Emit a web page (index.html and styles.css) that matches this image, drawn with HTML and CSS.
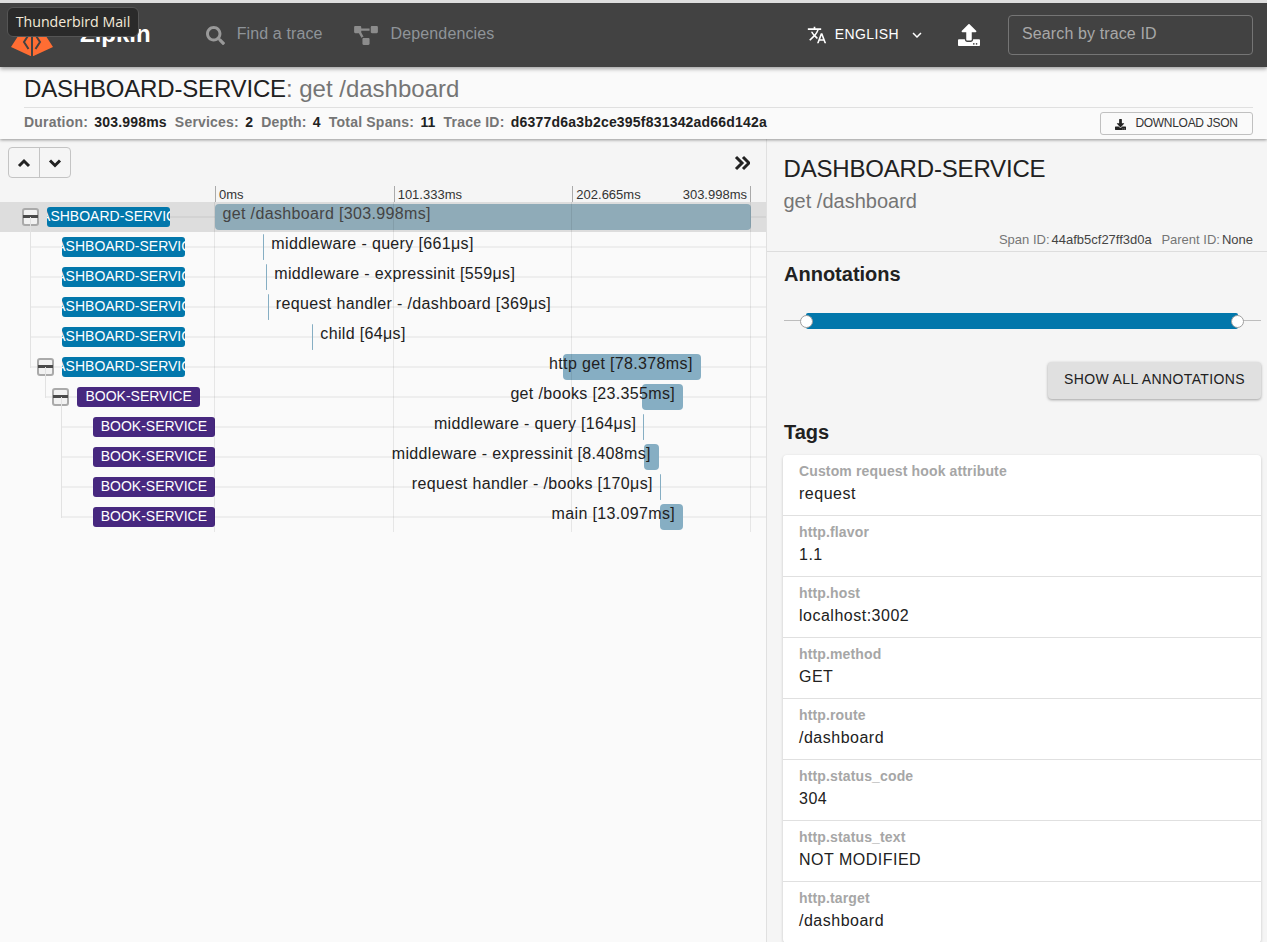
FILE: index.html
```html
<!DOCTYPE html>
<html lang="en">
<head>
<meta charset="utf-8">
<title>Zipkin</title>
<link rel="stylesheet" href="styles.css">
</head>
<body>
<div class="window-tip">Thunderbird Mail</div>
<header class="app-bar">
  <svg class="logo" viewBox="0 0 42 38" aria-hidden="true">
    <path class="logo-fill" d="M20 -3 0 28 19.500 37 20 37ZM22 -3 42 28 22.500 37 22 37Z"/>
    <path class="logo-cut" d="M17.500 16 13 23 17.500 30M24.500 16 29 23 24.500 30"/>
  </svg>
  <div class="brand">Zipkin</div>
  <nav class="nav">
    <a class="nav-item nav-find">
      <svg class="nav-icon" viewBox="0 0 512 512"><path d="M505 442.700 405.300 343c-4.500-4.500-10.600-7-17-7H372c27.600-35.300 44-79.700 44-128C416 93.100 322.900 0 208 0S0 93.100 0 208s93.100 208 208 208c48.300 0 92.700-16.400 128-44v16.300c0 6.400 2.500 12.500 7 17l99.700 99.700c9.400 9.400 24.600 9.400 33.900 0l28.300-28.300c9.400-9.400 9.400-24.600.1-34zM208 336c-70.700 0-128-57.200-128-128 0-70.700 57.200-128 128-128 70.700 0 128 57.200 128 128 0 70.700-57.200 128-128 128z"/></svg>
      <span>Find a trace</span>
    </a>
    <a class="nav-item nav-deps">
      <svg class="nav-icon-wide" viewBox="0 0 640 512"><path d="M384 320H256c-17.670 0-32 14.330-32 32v128c0 17.670 14.330 32 32 32h128c17.670 0 32-14.330 32-32V352c0-17.670-14.330-32-32-32zM192 32c0-17.670-14.330-32-32-32H32C14.330 0 0 14.330 0 32v128c0 17.670 14.330 32 32 32h95.720l73.160 128.040C211.980 300.980 232.400 288 256 288h.28L192 175.510V128h224V64H192V32zM608 0H480c-17.670 0-32 14.330-32 32v128c0 17.670 14.330 32 32 32h128c17.670 0 32-14.330 32-32V32c0-17.670-14.330-32-32-32z"/></svg>
      <span>Dependencies</span>
    </a>
  </nav>
  <div class="bar-actions">
    <button class="lang" type="button">
      <svg class="lang-icon" viewBox="0 0 24 24"><path d="M12.870 15.070l-2.540-2.510.03-.03c1.740-1.940 2.980-4.170 3.710-6.530H17V4h-7V2H8v2H1v1.990h11.170C11.500 7.920 10.440 9.750 9 11.350 8.070 10.320 7.300 9.190 6.690 8h-2c.73 1.630 1.730 3.170 2.980 4.560l-5.090 5.020L4 19l5-5 3.110 3.110.76-2.040zM18.500 10h-2L12 22h2l1.120-3h4.750L21 22h2l-4.500-12zm-2.620 7l1.620-4.330L19.120 17h-3.240z"/></svg>
      <span class="lang-text">ENGLISH</span>
      <svg class="lang-caret" viewBox="0 0 24 24"><path d="M16.590 8.590 12 13.170 7.410 8.590 6 10l6 6 6-6z"/></svg>
    </button>
    <svg class="upload" viewBox="0 0 512 512"><path d="M296 384h-80c-13.300 0-24-10.700-24-24V192h-87.700c-17.800 0-26.700-21.500-14.100-34.100L242.300 5.700c7.500-7.500 19.800-7.500 27.300 0l152.200 152.200c12.600 12.600 3.700 34.100-14.100 34.100H320v168c0 13.300-10.700 24-24 24zm216-8v112c0 13.300-10.700 24-24 24H24c-13.300 0-24-10.700-24-24V376c0-13.300 10.700-24 24-24h136v8c0 30.900 25.100 56 56 56h80c30.900 0 56-25.100 56-56v-8h136c13.300 0 24 10.700 24 24zm-124 88c0-11-9-20-20-20s-20 9-20 20 9 20 20 20 20-9 20-20zm64 0c0-11-9-20-20-20s-20 9-20 20 9 20 20 20 20-9 20-20z"/></svg>
    <input class="trace-search" type="text" placeholder="Search by trace ID">
  </div>
</header>

<section class="summary">
  <h1 class="summary-title"><span class="summary-service">DASHBOARD-SERVICE</span><span class="summary-op">: get /dashboard</span></h1>
  <div class="summary-meta">
    <dl class="stats">
      <dt>Duration:</dt><dd>303.998ms</dd>
      <dt>Services:</dt><dd>2</dd>
      <dt>Depth:</dt><dd>4</dd>
      <dt>Total Spans:</dt><dd>11</dd>
      <dt>Trace ID:</dt><dd>d6377d6a3b2ce395f831342ad66d142a</dd>
    </dl>
    <button class="download" type="button">
      <svg class="download-icon" viewBox="0 0 512 512"><path d="M216 0h80c13.300 0 24 10.700 24 24v168h87.700c17.800 0 26.700 21.500 14.100 34.100L269.700 378.300c-7.500 7.500-19.800 7.500-27.300 0L90.100 226.100c-12.600-12.600-3.700-34.100 14.100-34.100H192V24c0-13.300 10.700-24 24-24zm296 376v112c0 13.300-10.700 24-24 24H24c-13.300 0-24-10.700-24-24V376c0-13.300 10.700-24 24-24h146.700l49 49c20.100 20.100 52.500 20.100 72.600 0l49-49H488c13.300 0 24 10.700 24 24zm-124 88c0-11-9-20-20-20s-20 9-20 20 9 20 20 20 20-9 20-20zm64 0c0-11-9-20-20-20s-20 9-20 20 9 20 20 20 20-9 20-20z"/></svg>
      <span class="download-text">DOWNLOAD JSON</span>
    </button>
  </div>
</section>

<main class="trace-body">
  <section class="timeline">
    <div class="toolbar">
      <div class="stepper">
        <button class="step" type="button"><svg viewBox="0 0 16 16"><path d="M3 11 8 6 13 11"/></svg></button>
        <button class="step" type="button"><svg viewBox="0 0 16 16"><path d="M3 5.500 8 10.500 13 5.500"/></svg></button>
      </div>
      <svg class="collapse" viewBox="0 0 16 16"><path d="M2 2 8 8 2 14M9 2 15 8 9 14"/></svg>
    </div>
    <div class="ticks">
      <div class="tick"><span>0ms</span></div>
      <div class="tick"><span>101.333ms</span></div>
      <div class="tick tick-last"><span>202.665ms</span><span>303.998ms</span></div>
    </div>
    <div class="gantt">
      <div class="row row-active" style="--d:0">
        <div class="tree"><span class="toggle"></span><span class="badge dash"><span>DASHBOARD-SERVICE</span></span></div>
        <div class="track"><div class="span span-root" style="left:0;width:100%"><span class="label inside">get /dashboard [303.998ms]</span></div></div>
      </div>
      <div class="row" style="--d:1">
        <i class="stem"></i>
        <div class="tree"><span class="leaf"></span><span class="badge dash"><span>DASHBOARD-SERVICE</span></span></div>
        <div class="track"><div class="span" style="left:9.05%;width:.22%"><span class="label after">middleware - query [661μs]</span></div></div>
      </div>
      <div class="row" style="--d:1">
        <i class="stem"></i>
        <div class="tree"><span class="leaf"></span><span class="badge dash"><span>DASHBOARD-SERVICE</span></span></div>
        <div class="track"><div class="span" style="left:9.6%;width:.18%"><span class="label after">middleware - expressinit [559μs]</span></div></div>
      </div>
      <div class="row" style="--d:1">
        <i class="stem"></i>
        <div class="tree"><span class="leaf"></span><span class="badge dash"><span>DASHBOARD-SERVICE</span></span></div>
        <div class="track"><div class="span" style="left:9.89%;width:.12%"><span class="label after">request handler - /dashboard [369μs]</span></div></div>
      </div>
      <div class="row" style="--d:1">
        <i class="stem"></i>
        <div class="tree"><span class="leaf"></span><span class="badge dash"><span>DASHBOARD-SERVICE</span></span></div>
        <div class="track"><div class="span" style="left:18.19%;width:.02%"><span class="label after">child [64μs]</span></div></div>
      </div>
      <div class="row" style="--d:1">
        <i class="stem stem-end"></i>
        <div class="tree"><span class="toggle"></span><span class="badge dash"><span>DASHBOARD-SERVICE</span></span></div>
        <div class="track"><div class="span" style="left:64.93%;width:25.78%"><span class="label before">http get [78.378ms]</span></div></div>
      </div>
      <div class="row" style="--d:2">
        <i class="stem stem-end"></i>
        <div class="tree"><span class="toggle"></span><span class="badge book"><span>BOOK-SERVICE</span></span></div>
        <div class="track"><div class="span" style="left:79.76%;width:7.68%"><span class="label before">get /books [23.355ms]</span></div></div>
      </div>
      <div class="row" style="--d:3">
        <i class="stem"></i>
        <div class="tree"><span class="leaf"></span><span class="badge book"><span>BOOK-SERVICE</span></span></div>
        <div class="track"><div class="span" style="left:79.95%;width:.05%"><span class="label before">middleware - query [164μs]</span></div></div>
      </div>
      <div class="row" style="--d:3">
        <i class="stem"></i>
        <div class="tree"><span class="leaf"></span><span class="badge book"><span>BOOK-SERVICE</span></span></div>
        <div class="track"><div class="span" style="left:80.14%;width:2.77%"><span class="label before">middleware - expressinit [8.408ms]</span></div></div>
      </div>
      <div class="row" style="--d:3">
        <i class="stem"></i>
        <div class="tree"><span class="leaf"></span><span class="badge book"><span>BOOK-SERVICE</span></span></div>
        <div class="track"><div class="span" style="left:83.03%;width:.06%"><span class="label before">request handler - /books [170μs]</span></div></div>
      </div>
      <div class="row" style="--d:3">
        <i class="stem stem-end"></i>
        <div class="tree"><span class="leaf"></span><span class="badge book"><span>BOOK-SERVICE</span></span></div>
        <div class="track"><div class="span" style="left:83.12%;width:4.31%"><span class="label before">main [13.097ms]</span></div></div>
      </div>
      <div class="grid-lines"><i></i><i></i><i></i><i></i></div>
    </div>
  </section>

  <aside class="detail">
    <div class="detail-head">
      <h2 class="detail-service">DASHBOARD-SERVICE</h2>
      <div class="detail-op">get /dashboard</div>
      <div class="detail-ids">
        <span class="id-key">Span ID:</span><span class="id-val">44afb5cf27ff3d0a</span>
        <span class="id-key id-gap">Parent ID:</span><span class="id-val">None</span>
      </div>
    </div>
    <div class="detail-body">
      <h3 class="section-title">Annotations</h3>
      <div class="slider">
        <div class="slider-range"><i class="handle handle-start"></i><i class="handle handle-end"></i></div>
      </div>
      <div class="show-row"><button class="show-all" type="button">SHOW ALL ANNOTATIONS</button></div>
      <h3 class="section-title tags-title">Tags</h3>
      <ul class="tags">
        <li class="tag"><div class="tag-key">Custom request hook attribute</div><div class="tag-val">request</div></li>
        <li class="tag"><div class="tag-key">http.flavor</div><div class="tag-val">1.1</div></li>
        <li class="tag"><div class="tag-key">http.host</div><div class="tag-val">localhost:3002</div></li>
        <li class="tag"><div class="tag-key">http.method</div><div class="tag-val">GET</div></li>
        <li class="tag"><div class="tag-key">http.route</div><div class="tag-val">/dashboard</div></li>
        <li class="tag"><div class="tag-key">http.status_code</div><div class="tag-val">304</div></li>
        <li class="tag"><div class="tag-key">http.status_text</div><div class="tag-val">NOT MODIFIED</div></li>
        <li class="tag"><div class="tag-key">http.target</div><div class="tag-val">/dashboard</div></li>
      </ul>
    </div>
  </aside>
</main>
</body>
</html>
```
FILE: styles.css
```css
* { box-sizing: border-box; }
html, body { height: 100%; }
body {
  margin: 0;
  height: 942px;
  overflow: hidden;
  background: #fafafa;
  color: #212121;
  font-family: "Liberation Sans", Arial, sans-serif;
  font-size: 14px;
}
button { font-family: inherit; }
h1, h2, h3, ul, dl, dd { margin: 0; padding: 0; font-weight: normal; }
ul { list-style: none; }

/* OS tooltip floating over the app */
.window-tip {
  position: absolute;
  left: 7px;
  top: 7px;
  z-index: 10;
  width: 132px;
  height: 30px;
  border: 1px solid #555;
  border-radius: 6px;
  background: #2a2a2a;
  color: #f4ead9;
  font-family: "Open Sans", "Noto Sans", sans-serif;
  font-size: 14.200px;
  line-height: 28px;
  text-align: center;
}

/* App bar */
.app-bar {
  position: relative;
  z-index: 3;
  display: flex;
  align-items: center;
  height: 67px;
  border-top: 3px solid #dedede;
  background: #424242;
  box-shadow: 0 2px 4px rgba(0, 0, 0, .35);
  padding-right: 14px;
}
.logo { width: 42px; height: 38px; margin: 6px 0 0 11px; flex: none; overflow: visible; }
.logo-fill { fill: #ff6d33; }
.logo-cut { fill: none; stroke: #424242; stroke-width: 2; }
.brand {
  margin-left: 27px;
  margin-top: -2px;
  color: #fff;
  font-size: 24px;
  font-weight: 700;
}
.nav { display: flex; align-items: center; margin-left: 55px; margin-top: -2px; }
.nav-item { display: flex; align-items: center; color: #8f9499; font-size: 16px; letter-spacing: .12px; }
.nav-icon { width: 19px; height: 19px; margin: 3px 12px 0 0; fill: #999; }
.nav-icon-wide { width: 24px; height: 19px; margin: 2px 13px 0 0; fill: #8c8c8c; }
.nav-deps { margin-left: 31px; }
.bar-actions { display: flex; align-items: center; margin-left: auto; }
.lang {
  display: flex;
  align-items: center;
  padding: 0;
  border: 0;
  background: none;
  color: #fff;
  font-size: 14px;
}
.lang-text { margin-top: -2px; letter-spacing: .4px; }
.lang-icon { width: 20px; height: 20px; margin-right: 8px; fill: #fff; }
.lang-caret { width: 18px; height: 18px; margin-left: 9px; fill: #fff; }
.upload { width: 22px; height: 22px; margin-left: 32px; fill: #fff; }
.trace-search {
  width: 245px;
  height: 40px;
  margin-left: 28px;
  padding: 0 13px 2px;
  border: 1px solid #757575;
  border-radius: 4px;
  outline: 0;
  background: transparent;
  color: #fff;
  font-family: inherit;
  font-size: 16px;
  letter-spacing: .12px;
}
.trace-search::placeholder { color: #a8a8a8; opacity: 1; }

/* Trace summary */
.summary {
  position: relative;
  z-index: 2;
  height: 72px;
  padding: 0 14px 0 24px;
  background: #fafafa;
  box-shadow: 0 1px 3px rgba(0, 0, 0, .4);
}
.summary-title {
  height: 41px;
  padding-top: 7px;
  border-bottom: 1px solid #e0e0e0;
  font-size: 24px;
  line-height: 30px;
}
.summary-service { letter-spacing: -.18px; }
.summary-op { color: #757575; }
.summary-meta { display: flex; align-items: center; justify-content: space-between; height: 30px; }
.stats { display: flex; align-items: center; margin-top: -3px; font-size: 14px; font-weight: 700; letter-spacing: .2px; }
.stats dt { color: #757575; margin-right: 6.200px; }
.stats dd { margin-right: 8px; font-weight: 700; }
.download {
  display: flex;
  align-items: center;
  justify-content: center;
  width: 153px;
  height: 23px;
  margin-top: 1px;
  padding: 0;
  border: 1px solid #c0c0c0;
  border-radius: 3px;
  background: #fafafa;
  color: #333;
  font-size: 12px;
}
.download-text { margin-top: -2px; letter-spacing: -.3px; }
.download-icon { width: 11px; height: 11px; margin: 2px 9px 0 0; fill: #222; }

/* Layout */
.trace-body { display: flex; height: 803px; }
.timeline { width: 767px; flex: none; border-right: 1px solid #e0e0e0; }

/* Toolbar */
.toolbar {
  display: flex;
  align-items: center;
  justify-content: space-between;
  height: 47px;
  padding: 0 16px 0 8px;
  background: #f5f5f5;
}
.stepper { display: flex; border: 1px solid #c4c4c4; border-radius: 4px; }
.step {
  display: flex;
  align-items: center;
  justify-content: center;
  width: 30px;
  height: 29px;
  padding: 0;
  border: 0;
  background: none;
}
.step + .step { width: 31px; border-left: 1px solid #c4c4c4; }
.step svg { width: 16px; height: 16px; fill: none; stroke: #222; stroke-width: 3; }
.collapse { width: 16px; height: 16px; fill: none; stroke: #222; stroke-width: 3; }

/* Ruler */
.ticks {
  display: grid;
  grid-template-columns: repeat(3, 1fr);
  height: 16px;
  margin-left: 215px;
  margin-right: 15px;
  background: #f5f5f5;
  box-shadow: -215px 0 #f5f5f5, 15px 0 #f5f5f5;
  font-size: 13px;
  line-height: 17px;
  color: #333;
}
.tick { display: flex; justify-content: space-between; padding: 0 3px; border-left: 1px solid #aaa; }
.tick-last { border-right: 1px solid #aaa; }

/* Rows */
.gantt { position: relative; }
.row {
  position: relative;
  display: flex;
  height: 30px;
}
.row::before {
  content: "";
  position: absolute;
  left: calc(30px + (var(--d) - 1) * 15.300px);
  right: 0;
  top: 14px;
  height: 2px;
  background: #eee;
}
.row-active { background: #ddd; }
.row-active::before { background: #d3d3d3; left: 170px; }
.stem {
  position: absolute;
  left: calc(30px + (var(--d) - 1) * 15.300px);
  top: -15px;
  width: 1px;
  height: 45px;
  background: #e2e2e2;
}
.stem-end { height: 31px; }
.tree {
  position: relative;
  display: flex;
  align-items: center;
  width: 214.500px;
  flex: none;
  padding-left: calc(22px + var(--d) * 15.200px);
}
.toggle, .leaf { width: 17px; height: 18px; flex: none; margin-right: 8px; }
.toggle {
  position: relative;
  border: 2px solid #aaa;
  border-radius: 3px;
  background: #f2f2f2;
}
.toggle::after {
  content: "";
  position: absolute;
  left: -1px;
  right: -1px;
  top: 5px;
  height: 3px;
  background: #4a4a4a;
}
.badge {
  display: flex;
  justify-content: center;
  align-items: center;
  width: 122.500px;
  height: 20px;
  flex: none;
  overflow: hidden;
  border-radius: 3px;
  color: #fff;
  font-size: 14px;
  white-space: nowrap;
}
.badge span { flex: none; margin-top: -2px; }
.dash { background: #0277ab; }
.book { background: #47287f; }

/* Spans */
.track { position: relative; width: 536px; flex: none; }
.span {
  position: absolute;
  top: 2px;
  height: 26px;
  min-width: 1.300px;
  border-radius: 4px;
  background: #86aec3;
}
.span-root { background: #8fabb8; }
.label {
  position: absolute;
  top: -2px;
  color: #212121;
  font-size: 16px;
  line-height: 24px;
  letter-spacing: .35px;
  white-space: nowrap;
}
.inside { left: 8px; color: #444; }
.after { left: 100%; margin-left: 7px; }
.before { right: 8px; }

.grid-lines {
  position: absolute;
  left: 214px;
  top: 0;
  bottom: 0;
  width: 537px;
  display: flex;
  justify-content: space-between;
  pointer-events: none;
}
.grid-lines i { width: 1px; background: rgba(0, 0, 0, .08); }

/* Detail panel */
.detail { flex: 1; min-width: 0; background: #f5f5f5; }
.detail-head { height: 113px; padding: 16px 14px 0 16.500px; border-bottom: 1px solid #ddd; }
.detail-service { font-size: 24px; line-height: 28px; letter-spacing: -.18px; color: #212121; }
.detail-op { margin-top: 6px; font-size: 20px; line-height: 24px; color: #757575; }
.detail-ids { margin-top: 20px; text-align: right; font-size: 13px; line-height: 14px; color: #757575; }
.id-val { margin-left: 2px; color: #444; }
.id-gap { margin-left: 6px; }
.detail-body { padding: 0 6px 0 16px; }
.section-title { font-size: 20px; font-weight: 700; line-height: 24px; color: #212121; }
.detail-body > .section-title:first-child { padding-top: 10px; height: 34px; box-sizing: content-box; padding-left: 1px; }
.slider { position: relative; height: 16px; margin-top: 17px; margin-left: 1px; }
.slider::before {
  content: "";
  position: absolute;
  left: 0;
  right: 0;
  top: 7px;
  height: 1px;
  background: #bdbdbd;
}
.slider-range { position: relative; height: 16px; margin: 0 23.500px 0 22px; background: #0277ab; border-radius: 2px; }
.handle {
  position: absolute;
  top: 2px;
  width: 13px;
  height: 13px;
  border: 1px solid #9e9e9e;
  border-radius: 50%;
  background: #fff;
}
.handle-start { left: -6px; }
.handle-end { right: -6.500px; }
.show-row { display: flex; justify-content: flex-end; margin-top: 33px; }
.show-all {
  width: 213px;
  height: 37px;
  padding: 0 0 4px;
  border: 0;
  border-radius: 4px;
  background: #e0e0e0;
  color: #212121;
  font-size: 14px;
  letter-spacing: .4px;
  box-shadow: 0 1px 3px rgba(0, 0, 0, .35);
}
.tags-title { margin-top: 21px; padding-left: 1px; }
.tags {
  margin-top: 11px;
  background: #fff;
  border-radius: 4px;
  box-shadow: 0 1px 3px rgba(0, 0, 0, .2);
}
.tag { height: 61px; padding: 8px 16px 0; border-bottom: 1px solid #e0e0e0; }
.tag-key { font-size: 14px; font-weight: 700; line-height: 16px; letter-spacing: .14px; color: #a6a6a6; }
.tag-val { margin-top: 4px; font-size: 16px; line-height: 22px; letter-spacing: .5px; color: #212121; }
```
